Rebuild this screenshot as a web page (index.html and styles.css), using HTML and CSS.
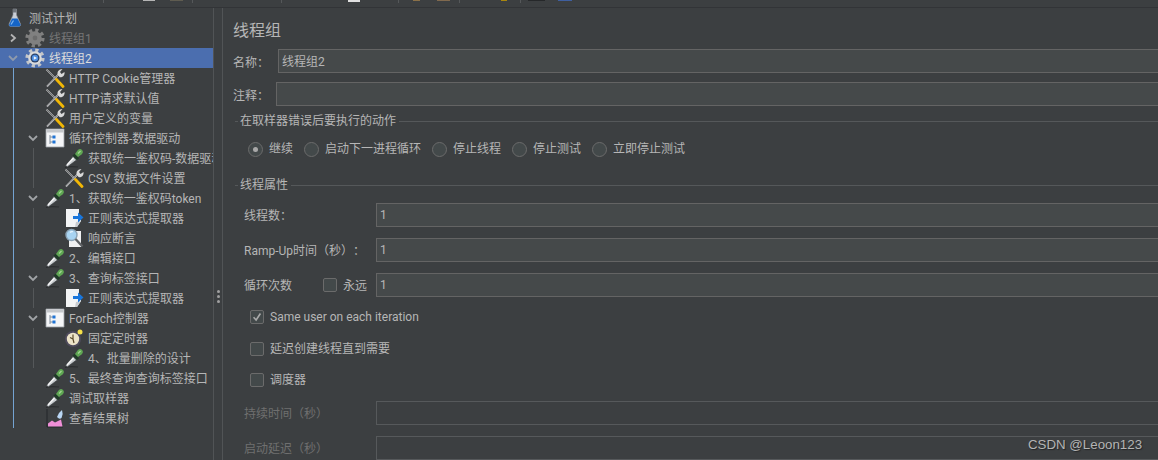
FILE: index.html
```html
<!DOCTYPE html>
<html lang="zh">
<head>
<meta charset="utf-8">
<title>线程组</title>
<link rel="stylesheet" href="styles.css">
</head>
<body>
<svg class="defs" width="0" height="0" aria-hidden="true">
  <defs>
    <symbol id="chev-r" viewBox="0 0 10 10"><path d="M3 1.5 7 5 3 8.5" fill="none" stroke="currentColor" stroke-width="1.8"/></symbol>
    <symbol id="chev-d" viewBox="0 0 10 10"><path d="M1 3 5 7 9 3" fill="none" stroke="currentColor" stroke-width="1.8"/></symbol>
    <symbol id="flask" viewBox="0 0 20 20">
      <path d="M8 1h3.500v6l4 9q.5 2-1.500 2.500h-8.500q-2-.5-1.500-2.500l4-9z" fill="#c9ced6" stroke="#8b8f96" stroke-width=".6"/>
      <path d="M7 10.500h5.500l3 6q0 2-1.500 2h-8.500q-1.500 0-1.300-2z" fill="#1565c8"/>
      <path d="M8 1h3.500v3.500h-3.500z" fill="#6f747b"/>
      <path d="M8.500 12.500l-2.500 4" stroke="#7fb6f0" stroke-width="1.200"/>
    </symbol>
    <symbol id="gear-off" viewBox="0 0 20 20">
      <circle cx="10" cy="10" r="7.900" fill="none" stroke="#808080" stroke-width="3.400" stroke-dasharray="3.200 3"/>
      <circle cx="10" cy="10" r="6.800" fill="#808080"/>
      <circle cx="10" cy="10" r="2.400" fill="#6c6c6c"/>
    </symbol>
    <symbol id="gear-on" viewBox="0 0 20 20">
      <circle cx="10" cy="10" r="7.900" fill="none" stroke="#c4c6c8" stroke-width="3.400" stroke-dasharray="3.200 3"/>
      <circle cx="10" cy="10" r="6.800" fill="#d9dadb"/>
      <circle cx="10" cy="10" r="4.500" fill="#2a3f66"/>
      <circle cx="10" cy="10" r="3.200" fill="#4f8fe0"/>
      <path d="M8.800 8.300 12 10l-3.200 1.700z" fill="#eef4fc"/>
    </symbol>
    <symbol id="tools" viewBox="0 0 20 20">
      <path d="M1.500 1.500 10.500 10.500" stroke="#c9c9c9" stroke-width="1.700"/>
      <path d="M1.500 1.500 10.500 10.500" stroke="#34373a" stroke-width=".6"/>
      <path d="M2 18.500 13.500 6.500" stroke="#d9d9d9" stroke-width="1.800"/>
      <path d="M2 18.500 13 7" stroke="#4a4e52" stroke-width=".6"/>
      <path d="M12.500 6.500q-.5-3.500 2.500-5l2.500-.5-2.500 3 1.500 2 3-2q.5 3.500-2.500 5-1.500.5-2.500 0z" fill="#d9d9d9"/>
      <path d="M11.500 11.500l6.500 7" stroke="#f2b705" stroke-width="2.800" stroke-linecap="round"/>
    </symbol>
    <symbol id="pipette" viewBox="0 0 20 20">
      <path d="M1 19.500q5-1.500 13-.5" fill="none" stroke="#2c2e30" stroke-width="1.200"/>
      <path d="M1.500 17.500 9 8.500l3.500 3.500-9 6.800z" fill="#c9cdd0" stroke="#3d4043" stroke-width=".7"/>
      <path d="M3 17 9.500 10" stroke="#f6f6f6" stroke-width="1.200"/>
      <path d="M8.500 7.500l4.500 4.500 2-1.800-4.500-4.500z" fill="#1f3a26"/>
      <path d="M11 6l2.500-3.500q2.500-2.500 4.500-.5t-.5 4.500L14 9z" fill="#5fa653"/>
      <path d="M14 5.500l2.500-2.500" stroke="#a5d895" stroke-width="1.200"/>
    </symbol>
    <symbol id="ctrl" viewBox="0 0 20 20">
      <path d="M1 1h18v18H1z" fill="#f4f5f7" stroke="#9a9ea3" stroke-width=".8"/>
      <path d="M1.500 1.500h17v3h-17z" fill="#c4c7cb"/>
      <path d="M5 7v9M5 9h3M5 14h3" stroke="#7f8b99" stroke-width="1" fill="none"/>
      <path d="M7.500 7.500h3v3h-3zM7.500 12.500h3v3h-3z" fill="#1f74d6"/>
    </symbol>
    <symbol id="regex" viewBox="0 0 20 20">
      <path d="M2 1h13v6h2v6l-4 6H2z" fill="#f3f4f5"/>
      <path d="M2 19h11l4-6-5 1-1 5z" fill="#c9ccd0"/>
      <path d="M9 8h5V4.500l5.500 5-5.500 5V11H9z" fill="#1976dc"/>
    </symbol>
    <symbol id="search" viewBox="0 0 20 20">
      <path d="M5 3h12v16H5z" fill="#eff0f1"/>
      <circle cx="7.500" cy="7" r="5.500" fill="#a8d4f2" stroke="#8ba3b5" stroke-width="1.400"/>
      <path d="M6 4.500a3 3 0 0 1 3-.7" stroke="#eaf6ff" stroke-width="1.200" fill="none"/>
      <path d="M11.500 11l7 7.500" stroke="#5f6265" stroke-width="2.400"/>
    </symbol>
    <symbol id="timer" viewBox="0 0 20 20">
      <circle cx="9" cy="11" r="8" fill="#4f4b5c"/>
      <circle cx="9" cy="11" r="6.200" fill="#ede4c8"/>
      <path d="M9 6.500V11l-3-1.500M9 11l1 4" stroke="#5a4a2a" stroke-width="1.200" fill="none"/>
      <circle cx="16" cy="4" r="2.500" fill="#f4e04a"/>
    </symbol>
    <symbol id="graph" viewBox="0 0 20 20">
      <path d="M2 1v18h16" stroke="#23262a" stroke-width="1" fill="none"/>
      <path d="M3 18.500v-3l4-3 3 2 6-3 1.500 7z" fill="#f08fd8"/>
      <path d="M12 9q1-4 5-7 1.500 4-.5 8-2 2-4.500-1z" fill="#b9d6f4"/>
    </symbol>
    <symbol id="tick" viewBox="0 0 14 14"><path d="M3 7.300 6 10.500 11 3" fill="none" stroke="#a9a9a9" stroke-width="1.900"/></symbol>
  </defs>
</svg>

<header class="toolbar">
  <i class="sep s1"></i><i class="bit b1"></i><i class="bit b2"></i><i class="sep s2"></i><i class="sep s3"></i>
  <i class="bit b3"></i><i class="sep s4"></i><i class="bit b4"></i><i class="bit b5"></i><i class="sep s5"></i>
  <i class="bit b6"></i><i class="sep s6"></i><i class="bit b7"></i><i class="bit b8"></i>
</header>

<div class="workspace">
  <nav class="tree">
    <div class="row root"><svg class="ico"><use href="#flask"/></svg><span>测试计划</span></div>
    <div class="row off"><span class="slot"><svg class="chev"><use href="#chev-r"/></svg></span><svg class="ico"><use href="#gear-off"/></svg><span>线程组1</span></div>
    <div class="row selected"><span class="slot"><svg class="chev"><use href="#chev-d"/></svg></span><svg class="ico"><use href="#gear-on"/></svg><span>线程组2</span></div>
    <div class="kids blue">
      <div class="row"><span class="slot"></span><svg class="ico"><use href="#tools"/></svg><span>HTTP Cookie管理器</span></div>
      <div class="row"><span class="slot"></span><svg class="ico"><use href="#tools"/></svg><span>HTTP请求默认值</span></div>
      <div class="row"><span class="slot"></span><svg class="ico"><use href="#tools"/></svg><span>用户定义的变量</span></div>
      <div class="row"><span class="slot"><svg class="chev"><use href="#chev-d"/></svg></span><svg class="ico"><use href="#ctrl"/></svg><span>循环控制器-数据驱动</span></div>
      <div class="kids">
        <div class="row"><span class="slot"></span><svg class="ico"><use href="#pipette"/></svg><span>获取统一鉴权码-数据驱动</span></div>
        <div class="row"><span class="slot"></span><svg class="ico"><use href="#tools"/></svg><span>CSV 数据文件设置</span></div>
      </div>
      <div class="row"><span class="slot"><svg class="chev"><use href="#chev-d"/></svg></span><svg class="ico"><use href="#pipette"/></svg><span>1、获取统一鉴权码token</span></div>
      <div class="kids">
        <div class="row"><span class="slot"></span><svg class="ico"><use href="#regex"/></svg><span>正则表达式提取器</span></div>
        <div class="row"><span class="slot"></span><svg class="ico"><use href="#search"/></svg><span>响应断言</span></div>
      </div>
      <div class="row"><span class="slot"></span><svg class="ico"><use href="#pipette"/></svg><span>2、编辑接口</span></div>
      <div class="row"><span class="slot"><svg class="chev"><use href="#chev-d"/></svg></span><svg class="ico"><use href="#pipette"/></svg><span>3、查询标签接口</span></div>
      <div class="kids">
        <div class="row"><span class="slot"></span><svg class="ico"><use href="#regex"/></svg><span>正则表达式提取器</span></div>
      </div>
      <div class="row"><span class="slot"><svg class="chev"><use href="#chev-d"/></svg></span><svg class="ico"><use href="#ctrl"/></svg><span>ForEach控制器</span></div>
      <div class="kids">
        <div class="row"><span class="slot"></span><svg class="ico"><use href="#timer"/></svg><span>固定定时器</span></div>
        <div class="row"><span class="slot"></span><svg class="ico"><use href="#pipette"/></svg><span>4、批量删除的设计</span></div>
      </div>
      <div class="row"><span class="slot"></span><svg class="ico"><use href="#pipette"/></svg><span>5、最终查询查询标签接口</span></div>
      <div class="row"><span class="slot"></span><svg class="ico"><use href="#pipette"/></svg><span>调试取样器</span></div>
      <div class="row"><span class="slot"></span><svg class="ico"><use href="#graph"/></svg><span>查看结果树</span></div>
    </div>
  </nav>

  <div class="splitter"><i></i><i></i><i></i></div>

  <main class="panel">
    <h1 class="title">线程组</h1>
    <div class="name-row"><label class="name-label">名称：</label><div class="field">线程组2</div></div>
    <div class="note-row"><label class="note-label">注释：</label><div class="field"></div></div>

    <div class="legend first"><span>在取样器错误后要执行的动作</span></div>
    <div class="radios">
      <div class="radio-item"><span class="radio on"></span><span>继续</span></div>
      <div class="radio-item"><span class="radio"></span><span>启动下一进程循环</span></div>
      <div class="radio-item"><span class="radio"></span><span>停止线程</span></div>
      <div class="radio-item"><span class="radio"></span><span>停止测试</span></div>
      <div class="radio-item"><span class="radio"></span><span>立即停止测试</span></div>
    </div>

    <div class="legend second"><span>线程属性</span></div>
    <div class="prop prop-first"><label class="prop-label">线程数：</label><div class="field">1</div></div>
    <div class="prop"><label class="prop-label">Ramp-Up时间（秒）：</label><div class="field">1</div></div>
    <div class="prop">
      <label class="loop-label">循环次数</label>
      <span class="box"></span><label class="forever">永远</label>
      <div class="field">1</div>
    </div>

    <div class="check c1"><span class="box"><svg class="tick"><use href="#tick"/></svg></span><label>Same user on each iteration</label></div>
    <div class="check c2"><span class="box"></span><label>延迟创建线程直到需要</label></div>
    <div class="check c3"><span class="box"></span><label>调度器</label></div>

    <div class="prop disabled"><label class="prop-label">持续时间（秒）</label><div class="field"></div></div>
    <div class="prop disabled"><label class="prop-label">启动延迟（秒）</label><div class="field"></div></div>
  </main>
</div>

<div class="watermark">CSDN @Leoon123</div>
</body>
</html>
```

FILE: styles.css
```css
* { box-sizing: border-box; }

html, body {
  margin: 0;
  height: 100%;
  overflow: hidden;
}

body {
  position: relative;
  width: 1158px;
  height: 460px;
  background: #3c3f41;
  color: #b6b6b6;
  font: 12px/20px Roboto, "Noto Sans CJK SC", sans-serif;
  text-spacing-trim: space-all;
}

.defs { display: block; height: 0; }

/* toolbar remnant */
.toolbar {
  display: flex;
  align-items: flex-start;
  height: 8px;
  border-bottom: 1px solid #323437;
}
.sep { width: 1px; height: 3px; background: #55585a; flex: none; }
.bit { height: 1px; flex: none; }
.s1 { margin-left: 103px; }
.b1 { margin-left: 39px; width: 12px; background: #b5b5b5; }
.b2 { margin-left: 15px; width: 13px; background: #5f5c50; }
.s2 { margin-left: 9px; }
.s3 { margin-left: 88px; }
.b3 { margin-left: 66px; width: 12px; height: 2px; background: #e0e0e0; }
.s4 { margin-left: 38px; }
.b4 { margin-left: 14px; width: 7px; background: #8a7048; }
.b5 { margin-left: 17px; width: 13px; background: #80694e; }
.s5 { margin-left: 9px; }
.b6 { margin-left: 41px; width: 6px; background: #a8860f; }
.s6 { margin-left: 13px; }
.b7 { margin-left: 7px; width: 17px; background: #26282a; }
.b8 { margin-left: 13px; width: 14px; background: #3f5f9f; }

.workspace {
  display: flex;
  height: 452px;
}

/* tree */
.tree {
  flex: none;
  width: 214px;
  border-right: 1px solid #515456;
  overflow: hidden;
}
.row {
  display: flex;
  align-items: center;
  height: 20px;
  padding-left: 5px;
  white-space: nowrap;
  overflow: hidden;
}
.row > span:last-child { padding-top: 2px; }
.kids .row { padding-left: 11px; }
.kids .kids .row { padding-left: 10px; }
.slot {
  flex: none;
  width: 20px;
  height: 20px;
  display: flex;
  align-items: center;
  padding-left: 3px;
}
.chev { width: 10px; height: 10px; color: #a0a3a6; }
.ico { flex: none; width: 20px; height: 20px; margin-right: 4px; }
.off { color: #757575; }
.off .chev { color: #b4b4b4; }
.selected { background: #4b6eaf; color: #dcdcdc; }
.selected .chev { color: #8f9aac; }

.kids { margin-left: 13px; border-left: 1px solid #55585a; }
.kids.blue { border-left-color: #74a3d2; }
.kids .kids { margin-left: 19px; }

/* splitter */
.splitter {
  flex: none;
  width: 8px;
  display: flex;
  flex-direction: column;
  align-items: center;
  justify-content: flex-start;
  gap: 2px;
  padding-top: 282px;
}
.splitter i { width: 3px; height: 3px; border-radius: 50%; background: #a0a0a0; }

/* panel */
.panel {
  flex: 1;
  min-width: 0;
  border-left: 1px solid #515456;
  padding: 11px 0 0 10px;
}
.title {
  margin: 0;
  height: 22px;
  font-size: 16px;
  line-height: 24px;
  font-weight: 400;
}
.field {
  flex: 1;
  height: 24px;
  margin-right: -4px;
  padding-left: 3px;
  line-height: 22px;
  background: #45494a;
  border: 1px solid #646464;
}
.name-row, .note-row, .prop {
  display: flex;
  align-items: center;
  height: 24px;
}
.name-row { margin-top: 8px; }
.note-row { margin-top: 9px; }
.name-row .field { line-height: 25px; }
.name-label { width: 45px; flex: none; padding-top: 4px; }
.note-label { width: 43px; flex: none; padding-top: 4px; }

.legend {
  display: flex;
  align-items: center;
  height: 16px;
  margin-left: 2px;
  gap: 2px;
}
.legend::before { content: ""; width: 3px; height: 1px; background: #55585a; flex: none; }
.legend::after { content: ""; flex: 1; height: 1px; background: #55585a; margin-left: 1px; }
.legend.first { margin-top: 7px; }
.legend.second { margin-top: 18px; }

.radios {
  display: flex;
  gap: 11px;
  height: 20px;
  margin: 10px 0 0 15px;
}
.radio-item { display: flex; align-items: center; gap: 6px; }
.radio {
  width: 15px;
  height: 15px;
  border: 1px solid #6b6b6b;
  border-radius: 50%;
  background: #43494a;
  display: flex;
  align-items: center;
  justify-content: center;
}
.radio.on::after {
  content: "";
  width: 5px;
  height: 5px;
  border-radius: 50%;
  background: #a9a9a9;
}

.prop { margin-top: 11px; padding-left: 11px; }
.prop-first { margin-top: 10px; }
.prop-label { width: 132px; flex: none; white-space: nowrap; padding-top: 2px; }
.loop-label { width: 79px; flex: none; padding-top: 2px; }
.forever { width: 33px; flex: none; margin-left: 6px; padding-top: 2px; }

.box {
  flex: none;
  width: 14px;
  height: 14px;
  border: 1px solid #6b6b6b;
  border-radius: 2px;
  background: #43494a;
  display: block;
}
.tick { display: block; width: 12px; height: 12px; }

.check {
  display: flex;
  align-items: center;
  gap: 6px;
  height: 20px;
  padding-left: 17px;
}
.c1 { margin-top: 10px; }
.c2 { margin-top: 12px; }
.c3 { margin-top: 11px; }

.disabled { color: #6f6f6f; }
.disabled .field { background: transparent; border-color: #56595b; }

.watermark {
  position: absolute;
  left: 1028px;
  top: 435px;
  color: #b4b4b4;
  font: 13.3px/20px "Liberation Sans", sans-serif;
  text-shadow: 1px 1px 1px #232527;
  white-space: nowrap;
}
```
